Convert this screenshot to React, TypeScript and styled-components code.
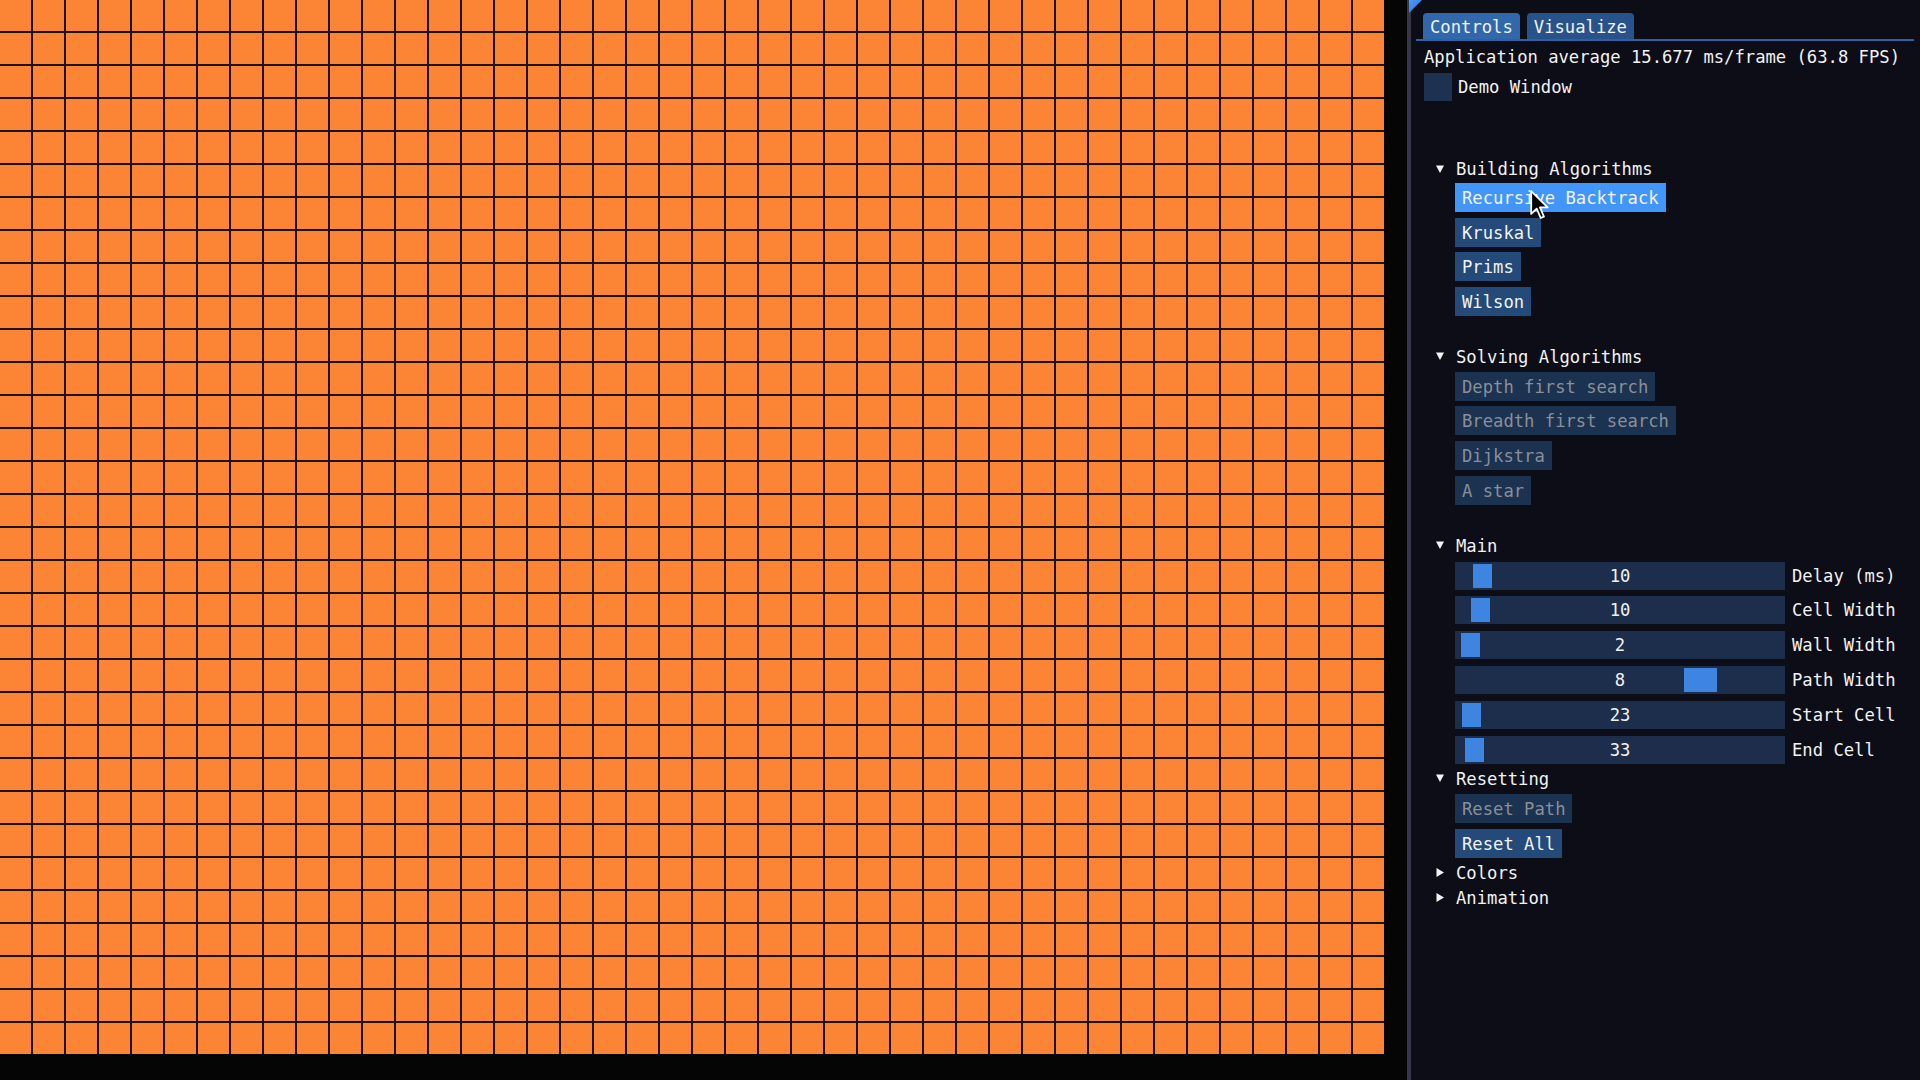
import React from "react";
import styled, { createGlobalStyle } from "styled-components";

const GlobalStyle = createGlobalStyle`
  html, body {
    margin: 0;
    padding: 0;
    background: #050505;
  }
  body {
    font-family: "DejaVu Sans Mono", "Liberation Mono", monospace;
  }
  * {
    box-sizing: border-box;
  }
`;

const COLS = 42;
const ROWS = 32;

type ButtonKind = "hovered" | "normal" | "disabled";

const buildingButtons: Array<{ label: string; kind: ButtonKind }> = [
  { label: "Recursive Backtrack", kind: "hovered" },
  { label: "Kruskal", kind: "normal" },
  { label: "Prims", kind: "normal" },
  { label: "Wilson", kind: "normal" },
];

const solvingButtons: Array<{ label: string; kind: ButtonKind }> = [
  { label: "Depth first search", kind: "disabled" },
  { label: "Breadth first search", kind: "disabled" },
  { label: "Dijkstra", kind: "disabled" },
  { label: "A star", kind: "disabled" },
];

const resetButtons: Array<{ label: string; kind: ButtonKind }> = [
  { label: "Reset Path", kind: "disabled" },
  { label: "Reset All", kind: "normal" },
];

const sliders = [
  { label: "Delay (ms)", value: "10", grab: 18, width: 19 },
  { label: "Cell Width", value: "10", grab: 16, width: 19 },
  { label: "Wall Width", value: "2", grab: 6, width: 19 },
  { label: "Path Width", value: "8", grab: 229, width: 33 },
  { label: "Start Cell", value: "23", grab: 7, width: 19 },
  { label: "End Cell", value: "33", grab: 10, width: 19 },
];

const TreeArrow = ({ open }: { open: boolean }) => (
  <ArrowBox>
    <svg width="8" height="9" viewBox="0 0 8 9">
      {open ? (
        <polygon points="0,0.5 8,0.5 4,8" fill="#f2f2f2" />
      ) : (
        <polygon points="0.5,0 8,4.5 0.5,9" fill="#f2f2f2" />
      )}
    </svg>
  </ArrowBox>
);

const Header = ({
  title,
  open,
  top,
}: {
  title: string;
  open: boolean;
  top: number;
}) => (
  <TreeHeader top={top}>
    <TreeArrow open={open} />
    <HeaderText>{title}</HeaderText>
  </TreeHeader>
);

const ButtonGroup = ({
  items,
  gap,
  top,
}: {
  items: Array<{ label: string; kind: ButtonKind }>;
  gap: number;
  top: number;
}) => (
  <ItemList gap={gap} top={top}>
    {items.map((item) => (
      <ImButton key={item.label} kind={item.kind}>
        {item.label}
      </ImButton>
    ))}
  </ItemList>
);

export default function App() {
  const cells = Array.from({ length: COLS * ROWS });

  return (
    <>
      <GlobalStyle />
      <Screen>
        <Viewport>
          <MazeGrid>
            {cells.map((_, i) => (
              <Cell key={i} />
            ))}
          </MazeGrid>
        </Viewport>
        <Panel>
          <CornerGrip />
          <TabBar>
            <Tab active>Controls</Tab>
            <Tab>Visualize</Tab>
          </TabBar>
          <StatsLine>Application average 15.677 ms/frame (63.8 FPS)</StatsLine>
          <CheckRow>
            <CheckBox />
            <CheckLabel>Demo Window</CheckLabel>
          </CheckRow>

          <Header title="Building Algorithms" open top={56} />
          <ButtonGroup items={buildingButtons} gap={5.5} top={2} />

          <Header title="Solving Algorithms" open top={29} />
          <ButtonGroup items={solvingButtons} gap={5.7} top={3} />

          <Header title="Main" open top={29} />
          <ItemList gap={6.8} top={4}>
            {sliders.map((s) => (
              <SliderRow key={s.label}>
                <SliderFrame>
                  <SliderGrab style={{ left: s.grab, width: s.width }} />
                  <SliderValue>{s.value}</SliderValue>
                </SliderFrame>
                <SliderLabel>{s.label}</SliderLabel>
              </SliderRow>
            ))}
          </ItemList>

          <Header title="Resetting" open top={3} />
          <ButtonGroup items={resetButtons} gap={6} top={3} />

          <Header title="Colors" open={false} top={3} />
          <Header title="Animation" open={false} top={1} />

          <Cursor>
            <svg width="19" height="29" viewBox="0 0 12.6 19.6">
              <path
                d="M0.7 0.7 L0.7 16.2 L4.4 12.6 L7.1 18.9 L9.3 18 L6.6 11.8 L11.8 11.8 Z"
                fill="#000"
                stroke="#fff"
                strokeWidth="1.2"
                strokeLinejoin="round"
              />
            </svg>
          </Cursor>
        </Panel>
      </Screen>
    </>
  );
}

const Screen = styled.div`
  width: 1920px;
  height: 1080px;
  display: flex;
  overflow: hidden;
  background: #050505;
`;

const Viewport = styled.div`
  flex: 0 0 1407px;
  height: 100%;
  background: #050505;
`;

const MazeGrid = styled.div`
  display: grid;
  grid-template-columns: repeat(${COLS}, 31px);
  grid-auto-rows: 31px;
  gap: 2px;
  width: 1384px;
  background: #1f1209;
`;

const Cell = styled.div`
  background: #fb8535;
`;

const Panel = styled.div`
  position: relative;
  flex: 1;
  height: 100%;
  background: #0d0d17;
  border-left: 4px solid #37374c;
  padding: 0 6px 0 13px;
  color: #f2f2f2;
  font-size: 17.2px;
  white-space: nowrap;
`;

const CornerGrip = styled.div`
  position: absolute;
  top: 0;
  left: -2px;
  width: 13px;
  height: 13px;
  background: linear-gradient(135deg, #4a9cff 0%, #2f6fc4 100%);
  clip-path: polygon(0 0, 100% 0, 0 100%);
`;

const TabBar = styled.div`
  display: flex;
  gap: 7px;
  margin: 13px 0 0 -8px;
  padding-left: 7px;
  border-bottom: 2px solid #2f61a2;
`;

const Tab = styled.div<{ active?: boolean }>`
  height: 26px;
  line-height: 28px;
  padding: 0 7px;
  border-radius: 4px 4px 0 0;
  background: ${(props) => (props.active ? "#3068ab" : "#27528a")};
  color: #f2f2f2;
`;

const StatsLine = styled.div`
  margin-top: 6px;
  height: 20px;
  line-height: 21px;
`;

const CheckRow = styled.div`
  margin-top: 6px;
  display: flex;
  align-items: center;
  height: 28px;
`;

const CheckBox = styled.div`
  width: 28px;
  height: 28px;
  background: #1d3150;
`;

const CheckLabel = styled.span`
  margin-left: 6px;
  line-height: 30px;
`;

const TreeHeader = styled.div<{ top: number }>`
  margin-top: ${(props) => props.top}px;
  height: 24px;
  display: flex;
  align-items: center;
  padding-left: 12px;
`;

const ArrowBox = styled.div`
  width: 8px;
  height: 9px;
  display: flex;
`;

const HeaderText = styled.span`
  margin-left: 12px;
  line-height: 26px;
`;

const ItemList = styled.div<{ gap: number; top: number }>`
  margin-top: ${(props) => props.top}px;
  padding-left: 31px;
  display: flex;
  flex-direction: column;
  align-items: flex-start;
  gap: ${(props) => props.gap}px;
`;

const ImButton = styled.div<{ kind: ButtonKind }>`
  height: 29px;
  padding: 1px 7px 0;
  line-height: 29px;
  background: ${(props) =>
    props.kind === "hovered"
      ? "#4296fa"
      : props.kind === "normal"
      ? "#234a78"
      : "#1b3251"};
  color: ${(props) => (props.kind === "disabled" ? "#8a8f98" : "#f2f2f2")};
`;

const SliderRow = styled.div`
  display: flex;
  align-items: center;
  height: 28px;
`;

const SliderFrame = styled.div`
  position: relative;
  width: 330px;
  height: 28px;
  background: #1c2e4c;
  display: flex;
  align-items: center;
  justify-content: center;
`;

const SliderGrab = styled.div`
  position: absolute;
  top: 2px;
  height: 24px;
  background: #3d85e0;
`;

const SliderValue = styled.span`
  position: relative;
  line-height: 30px;
`;

const SliderLabel = styled.span`
  margin-left: 7px;
  line-height: 30px;
`;

const Cursor = styled.div`
  position: absolute;
  left: 119px;
  top: 190px;
  width: 19px;
  height: 29px;
  pointer-events: none;
`;
